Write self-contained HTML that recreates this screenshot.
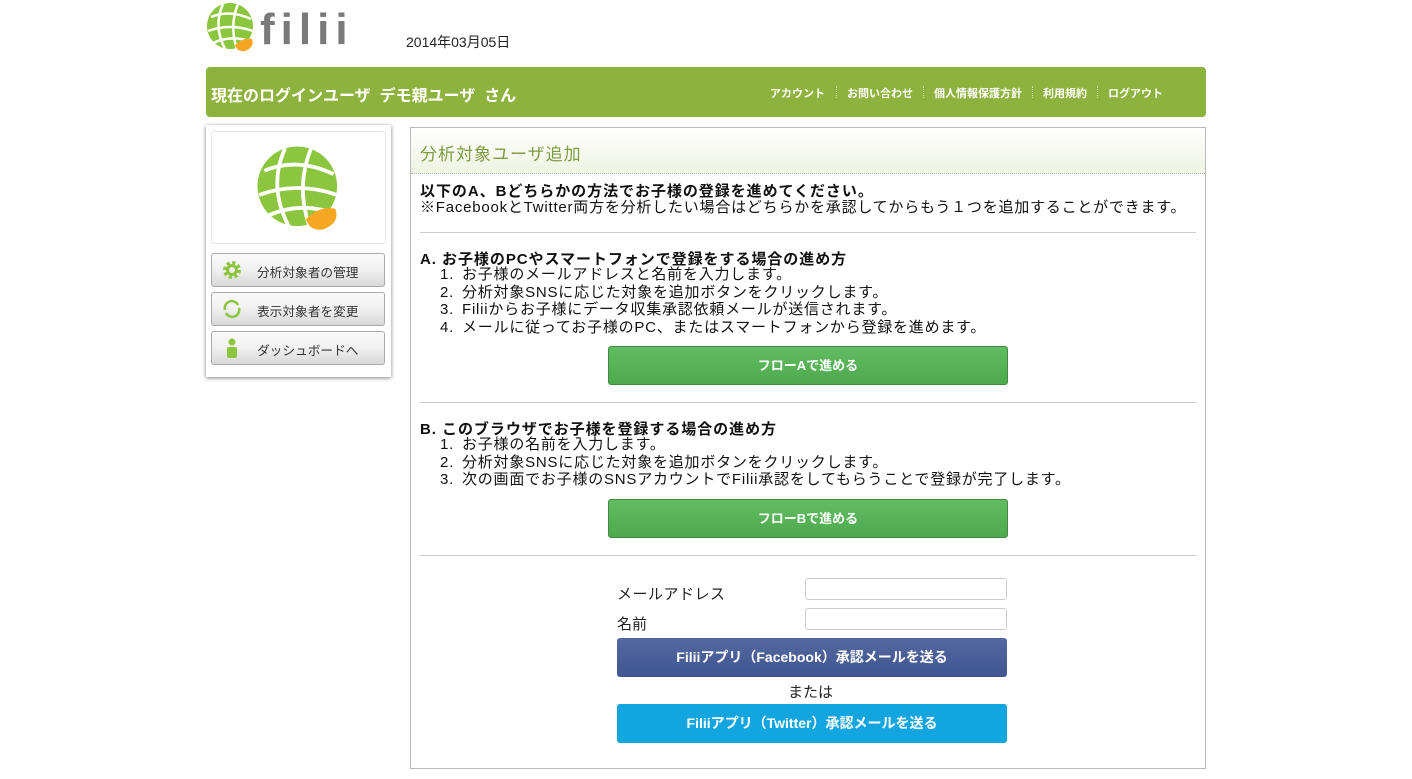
<!DOCTYPE html>
<html><head><meta charset="utf-8"><style>
*{margin:0;padding:0;box-sizing:border-box}
body{width:1412px;height:779px;background:#fff;position:relative;font-family:"Liberation Sans","Noto Sans CJK JP",sans-serif;color:#222;overflow:hidden}
.a{position:absolute;white-space:nowrap}
.bar{left:206px;top:67px;width:1000px;height:50px;background:#8db23d;border-radius:4px}
.nav{top:85px;font-size:11px;font-weight:bold;color:#fff}
.sep{top:86px;width:0;height:12px;border-left:1px dotted #d5e5b0}
.side{left:206px;top:125px;width:185px;height:252px;background:#fff;box-shadow:0 1px 4px rgba(0,0,0,.5)}
.sb{left:211px;width:174px;height:34px;border:1px solid #aaa;border-radius:3px;background:linear-gradient(#fafafa,#f0f0f0 50%,#d8d8d8);font-size:12.7px;color:#333;padding:8px 0 0 45px}
.main{left:410px;top:127px;width:796px;height:642px;border:1px solid #bbb}
.hr{left:420px;width:776px;height:1px;background:#ccc}
.t{font-size:15px;line-height:18px;color:#111;letter-spacing:.78px}
.h{font-size:15px;font-weight:bold;color:#111;letter-spacing:.95px}
.btn{border-radius:3px;color:#fff;font-weight:bold;text-align:center}
.g{left:608px;width:400px;height:39px;background:linear-gradient(#62bd62,#4ea94e);border:1px solid #3f8b3f;line-height:37px;font-size:13px}
.inp{left:805px;width:202px;height:22px;border:1px solid #ccc;border-radius:3px}
.n{display:inline-block;width:22px}
</style></head><body>
<svg class="a" style="left:205px;top:1px" width="52" height="52" viewBox="0 0 52 52">
<circle cx="25" cy="25" r="23" fill="#8cc63f"/>
<g stroke="#fff" stroke-width="2.5" fill="none"><path d="M6 16 Q25 8 46 18"/><path d="M3 30 Q25 22 48 30"/><path d="M8 42 Q26 34 44 40"/><path d="M18 3 Q8 25 20 48"/><path d="M33 3 Q24 25 32 48"/></g>
<path d="M30 44 Q38 36 47 38 Q50 46 40 50 Q32 51 30 44Z" fill="#f5a623"/>
</svg>
<div class="a" style="left:260px;top:8px;font-size:44px;font-weight:bold;color:#7a7a7a;letter-spacing:6px;line-height:44px">filii</div>
<div class="a" style="left:406px;top:32px;font-size:14px">2014年03月05日</div>
<div class="a bar"></div>
<div class="a" style="left:211px;top:82px;font-size:16px;font-weight:bold;color:#fff">現在のログインユーザ&nbsp;&nbsp;デモ親ユーザ&nbsp;&nbsp;さん</div>
<div class="a nav" style="left:770px">アカウント</div><div class="a sep" style="left:836px"></div>
<div class="a nav" style="left:847px">お問い合わせ</div><div class="a sep" style="left:923px"></div>
<div class="a nav" style="left:934px">個人情報保護方針</div><div class="a sep" style="left:1032px"></div>
<div class="a nav" style="left:1043px">利用規約</div><div class="a sep" style="left:1097px"></div>
<div class="a nav" style="left:1108px">ログアウト</div>
<div class="a side"></div>
<div class="a" style="left:211px;top:131px;width:175px;height:113px;border:1px solid #e5e5e5;border-radius:3px"></div>
<svg class="a" style="left:253px;top:143px" width="92" height="90" viewBox="0 0 52 52">
<circle cx="25" cy="25" r="23" fill="#8cc63f"/>
<g stroke="#fff" stroke-width="2.2" fill="none"><path d="M6 16 Q25 8 46 18"/><path d="M3 30 Q25 22 48 30"/><path d="M8 42 Q26 34 44 40"/><path d="M18 3 Q8 25 20 48"/><path d="M33 3 Q24 25 32 48"/></g>
<path d="M30 44 Q38 36 47 38 Q50 46 40 50 Q32 51 30 44Z" fill="#f5a623"/>
</svg>
<div class="a sb" style="top:253px">分析対象者の管理</div>
<div class="a sb" style="top:292px">表示対象者を変更</div>
<div class="a sb" style="top:331px">ダッシュボードへ</div>
<svg class="a" style="left:221px;top:259px" width="22" height="22" viewBox="0 0 22 22"><circle cx="11" cy="11" r="7" fill="none" stroke="#8cc63f" stroke-width="4" stroke-dasharray="3 2.5"/><circle cx="11" cy="11" r="6" fill="#8cc63f"/><circle cx="11" cy="11" r="3" fill="#eee"/></svg>
<svg class="a" style="left:221px;top:298px" width="22" height="22" viewBox="0 0 22 22"><path d="M4 12 A7 7 0 0 1 17 7" fill="none" stroke="#8cc63f" stroke-width="2.5"/><path d="M18 10 A7 7 0 0 1 5 15" fill="none" stroke="#8cc63f" stroke-width="2.5"/></svg>
<svg class="a" style="left:225px;top:337px" width="14" height="22" viewBox="0 0 14 22"><circle cx="7" cy="5" r="3.5" fill="#8cc63f"/><rect x="2" y="10" width="10" height="11" rx="2" fill="#8cc63f"/></svg>
<div class="a main"></div>
<div class="a" style="left:411px;top:128px;width:794px;height:46px;background:linear-gradient(#fff,#eef3e2);border-bottom:1px dotted #aaa"></div>
<div class="a" style="left:420px;top:140px;font-size:17px;color:#7e9c44;letter-spacing:1px">分析対象ユーザ追加</div>
<div class="a h" style="left:420px;top:180px">以下のA、Bどちらかの方法でお子様の登録を進めてください。</div>
<div class="a t" style="left:420px;top:199px">※FacebookとTwitter両方を分析したい場合はどちらかを承認してからもう１つを追加することができます。</div>
<div class="a hr" style="top:232px"></div>
<div class="a h" style="left:420px;top:248px">A. お子様のPCやスマートフォンで登録をする場合の進め方</div>
<div class="a t" style="left:440px;top:266px;line-height:17.7px"><span class="n">1.</span>お子様のメールアドレスと名前を入力します。<br><span class="n">2.</span>分析対象SNSに応じた対象を追加ボタンをクリックします。<br><span class="n">3.</span>Filiiからお子様にデータ収集承認依頼メールが送信されます。<br><span class="n">4.</span>メールに従ってお子様のPC、またはスマートフォンから登録を進めます。</div>
<div class="a btn g" style="top:346px">フローAで進める</div>
<div class="a hr" style="top:402px"></div>
<div class="a h" style="left:420px;top:418px">B. このブラウザでお子様を登録する場合の進め方</div>
<div class="a t" style="left:440px;top:436px;line-height:17.7px"><span class="n">1.</span>お子様の名前を入力します。<br><span class="n">2.</span>分析対象SNSに応じた対象を追加ボタンをクリックします。<br><span class="n">3.</span>次の画面でお子様のSNSアカウントでFilii承認をしてもらうことで登録が完了します。</div>
<div class="a btn g" style="top:499px">フローBで進める</div>
<div class="a hr" style="top:555px"></div>
<div class="a" style="left:617px;top:583px;font-size:15px;letter-spacing:.5px">メールアドレス</div>
<div class="a inp" style="top:578px"></div>
<div class="a" style="left:617px;top:613px;font-size:15px">名前</div>
<div class="a inp" style="top:608px"></div>
<div class="a btn" style="left:617px;top:638px;width:390px;height:39px;background:linear-gradient(#5567a0,#3f5690);line-height:39px;font-size:14px">Filiiアプリ（Facebook）承認メールを送る</div>
<div class="a" style="left:788px;top:681px;font-size:15px">または</div>
<div class="a btn" style="left:617px;top:704px;width:390px;height:39px;background:#13a5e0;line-height:39px;font-size:14px">Filiiアプリ（Twitter）承認メールを送る</div>
</body></html>
